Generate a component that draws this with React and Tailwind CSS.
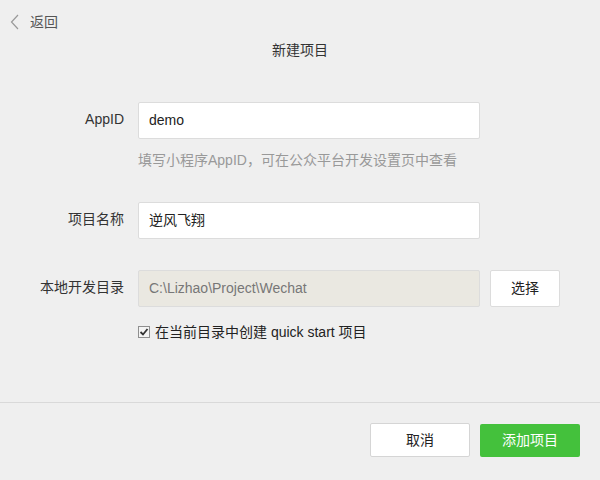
import React from "react";

export default function App() {
  const font = { fontFamily: '"Liberation Sans", "Noto Sans CJK SC", sans-serif' };
  return (
    <div className="w-[600px] h-[480px] bg-[#efefef] flex flex-col text-[14px] text-[#333]" style={font}>
      <div className="flex-1">
        <div className="flex items-center h-[20px] mt-[12px] pl-[10px]">
          <svg width="10" height="16" viewBox="0 0 10 16" className="mt-[-1px]">
            <path d="M8 1 L1.5 8 L8 15" fill="none" stroke="#999" strokeWidth="1.2" />
          </svg>
          <span className="ml-[10px] leading-[20px] text-[#555]">返回</span>
        </div>
        <div className="mt-[8px] text-center leading-[20px] text-[14px] text-[#333]">新建项目</div>

        <div className="mt-[42px] flex items-start">
          <div className="w-[124px] text-right pt-[7px] leading-[20px]">AppID</div>
          <div className="ml-[14px] w-[342px] h-[37px] bg-white border border-[#dcdcdc] rounded-[2px] flex items-center px-[10px] text-[#222]">demo</div>
        </div>
        <div className="mt-[11px] ml-[138px] leading-[20px] text-[#999]">填写小程序AppID，可在公众平台开发设置页中查看</div>

        <div className="mt-[32px] flex items-start">
          <div className="w-[124px] text-right pt-[7px] leading-[20px]">项目名称</div>
          <div className="ml-[14px] w-[342px] h-[37px] bg-white border border-[#dcdcdc] rounded-[2px] flex items-center px-[10px] text-[#222]">逆风飞翔</div>
        </div>

        <div className="mt-[31px] flex items-start">
          <div className="w-[124px] text-right pt-[7px] leading-[20px]">本地开发目录</div>
          <div className="ml-[14px] w-[342px] h-[37px] bg-[#eae8e1] border border-[#dcdcdc] rounded-[2px] flex items-center px-[10px] text-[#777]">{"C:\\Lizhao\\Project\\Wechat"}</div>
          <div className="ml-[10px] w-[70px] h-[37px] bg-white border border-[#dcdcdc] rounded-[2px] flex items-center justify-center text-[#222]">选择</div>
        </div>

        <div className="mt-[15px] ml-[138px] flex items-center h-[20px]">
          <span className="w-[12px] h-[12px] border border-[#8f8f8f] bg-[#f4f4f4] flex items-center justify-center">
            <svg width="10" height="10" viewBox="0 0 10 10">
              <path d="M1.5 5 L4 7.5 L8.5 2" fill="none" stroke="#333" strokeWidth="1.8" />
            </svg>
          </span>
          <span className="ml-[5px] leading-[20px] text-[#222]">在当前目录中创建 quick start 项目</span>
        </div>
      </div>

      <div className="h-[78px] border-t border-[#d9d9d9] flex justify-end items-start pt-[20px] pr-[20px]">
        <div className="w-[100px] h-[34px] bg-white border border-[#d5d5d5] rounded-[2px] flex items-center justify-center text-[#222]">取消</div>
        <div className="ml-[10px] w-[100px] h-[33px] mt-[1px] bg-[#44c13c] rounded-[2px] flex items-center justify-center text-white">添加项目</div>
      </div>
    </div>
  );
}
